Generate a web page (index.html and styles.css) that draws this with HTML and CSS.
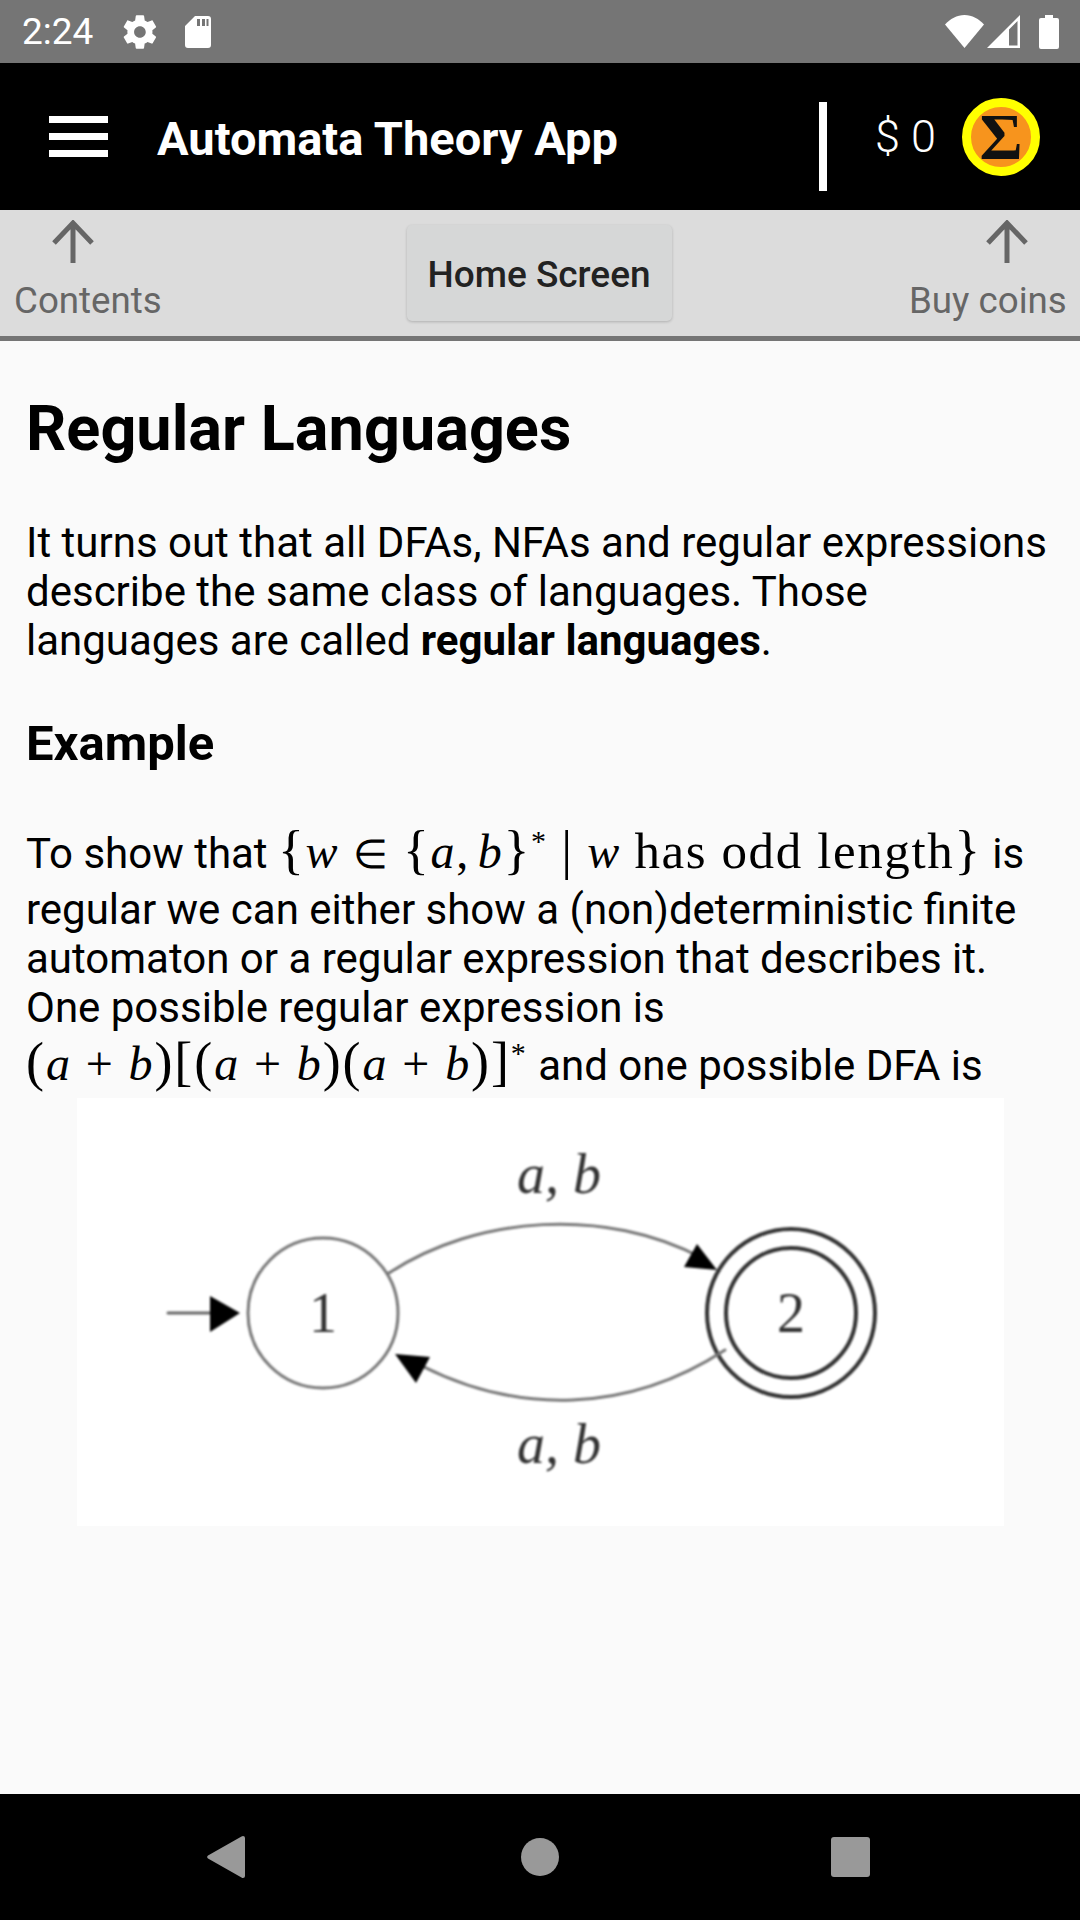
FILE: index.html
```html
<!DOCTYPE html>
<html>
<head>
  <title>Automata Theory App</title>
  <link rel="stylesheet" href="styles.css">
</head>
<body>
  <div class="status-bar">
    <div class="status-left">
      <span class="time">2:24</span>
      <svg class="ic-gear" viewBox="0 0 24 24"><path d="M19.4 13c.04-.32.07-.66.07-1s-.03-.68-.07-1l2.1-1.65c.2-.15.25-.42.12-.64l-2-3.46c-.12-.22-.39-.3-.61-.22l-2.49 1c-.52-.4-1.08-.73-1.69-.98l-.38-2.65C14.4 2.18 14.2 2 13.95 2h-4c-.25 0-.45.18-.49.42l-.38 2.65c-.61.25-1.17.59-1.69.98l-2.49-1c-.23-.09-.49 0-.61.22l-2 3.46c-.13.22-.07.49.12.64L4.5 11c-.04.32-.07.66-.07 1s.03.68.07 1l-2.11 1.65c-.19.15-.25.42-.12.64l2 3.46c.12.22.39.3.61.22l2.49-1c.52.4 1.08.73 1.69.98l.38 2.65c.04.24.24.42.49.42h4c.25 0 .45-.18.49-.42l.38-2.65c.61-.25 1.17-.59 1.69-.98l2.49 1c.23.09.49 0 .61-.22l2-3.46c.12-.22.07-.49-.12-.64L19.4 13zM11.95 15.5c-1.93 0-3.5-1.57-3.5-3.5s1.57-3.5 3.5-3.5 3.5 1.57 3.5 3.5-1.57 3.5-3.5 3.5z"/></svg>
      <svg class="ic-sd" viewBox="0 0 26 32"><path d="M10 0h13a3 3 0 0 1 3 3v26a3 3 0 0 1-3 3H3a3 3 0 0 1-3-3V10zM12 3v7h3V3zM17 3v7h3V3zM21.500 3v7h2V3z" fill-rule="evenodd"/></svg>
    </div>
    <div class="status-right">
      <svg class="ic-wifi" viewBox="0 0 39 33"><path d="M19.500 33 0 9.500C5 4 12 0 19.500 0S34 4 39 9.500z"/></svg>
      <svg class="ic-signal" viewBox="0 0 33 33"><path d="M33 0v33H0zM30.500 6 22 14.500v16h8.500z" fill-rule="evenodd"/></svg>
      <svg class="ic-battery" viewBox="0 0 20 34"><path d="M6 0h8v3h4a2 2 0 0 1 2 2v27a2 2 0 0 1-2 2H2a2 2 0 0 1-2-2V5a2 2 0 0 1 2-2h4z"/></svg>
    </div>
  </div>

  <header class="app-bar">
    <div class="menu-btn"><span></span><span></span><span></span></div>
    <h1 class="app-title">Automata Theory App</h1>
    <div class="divider"></div>
    <span class="coins">$ 0</span>
    <div class="coin"><span>Σ</span></div>
  </header>

  <nav class="toolbar">
    <div class="tool-link">
      <svg class="ic-up ic-up-left" viewBox="0 0 42 44"><path d="M21 43V3M2 23 21 3l19 20" fill="none" stroke="#666" stroke-width="5"/></svg>
      <span>Contents</span>
    </div>
    <button class="home-btn">Home Screen</button>
    <div class="tool-link tool-link-right">
      <svg class="ic-up ic-up-right" viewBox="0 0 42 44"><path d="M21 43V3M2 23 21 3l19 20" fill="none" stroke="#666" stroke-width="5"/></svg>
      <span>Buy coins</span>
    </div>
  </nav>

  <main class="content">
    <h2 class="page-title">Regular Languages</h2>
    <p class="intro">It turns out that all DFAs, NFAs and regular expressions describe the same class of languages. Those languages are called <b>regular languages</b>.</p>
    <h3 class="sub-title">Example</h3>
    <p class="example">To show that <span class="math math-set"><span class="brace">{</span><i>w</i> <span class="rel">∈</span> <span class="brace">{</span><i>a</i>,<i class="after-comma">b</i><span class="brace">}</span><sup>*</sup> <span class="bar">|</span> <i>w</i> <span class="math-text">has odd length</span><span class="brace">}</span></span> is regular we can either show a (non)deterministic finite automaton or a regular expression that describes it. One possible regular expression is <span class="math math-expr"><span class="brace">(</span><i>a</i> + <i>b</i><span class="brace">)[(</span><i>a</i> + <i>b</i><span class="brace">)(</span><i>a</i> + <i>b</i><span class="brace">)]</span><sup>*</sup></span> and one possible DFA is</p>

    <div class="diagram">
      <svg viewBox="0 0 927 428" width="927" height="428">
        <g fill="none" stroke-linecap="round">
          <path d="M91 215H150" stroke="#666" stroke-width="3"/>
          <circle cx="246" cy="215" r="75" stroke="#777" stroke-width="3"/>
          <circle cx="714" cy="215" r="84" stroke="#333" stroke-width="4"/>
          <circle cx="714" cy="215" r="65" stroke="#333" stroke-width="4"/>
          <path d="M312 175C400 117 530 109 625 160" stroke="#777" stroke-width="3"/>
          <path d="M648 252C550 316 440 316 345 268" stroke="#777" stroke-width="3"/>
        </g>
        <g fill="#000">
          <path d="M163 215 133 198V234z"/>
          <path d="M640 172 620 146 607 169z"/>
          <path d="M318 256 353 259 339 285z"/>
        </g>
        <g class="diagram-label">
          <text x="482" y="95" text-anchor="middle" font-style="italic">a, b</text>
          <text x="482" y="365" text-anchor="middle" font-style="italic">a, b</text>
          <text x="246" y="234" text-anchor="middle">1</text>
          <text x="714" y="234" text-anchor="middle">2</text>
        </g>
      </svg>
    </div>
  </main>

  <footer class="nav-bar">
    <svg class="ic-back" viewBox="0 0 38 42"><path d="M36 0a2 2 0 0 1 2 2v38a2 2 0 0 1-2 2c-.6 0-1-.2-1.500-.6L1 22.500a2 2 0 0 1 0-3L34.500.6C35 .2 35.400 0 36 0z"/></svg>
    <div class="nav-circle"></div>
    <div class="nav-square"></div>
  </footer>
</body>
</html>
```

FILE: styles.css
```css
body {
  margin: 0;
  width: 1080px;
  height: 1920px;
  display: flex;
  flex-direction: column;
  font-family: Roboto, sans-serif;
  background-color: #fafafa;
  overflow: hidden;
}

/* status bar */
.status-bar {
  height: 63px;
  background: #757575;
  display: flex;
  justify-content: space-between;
  align-items: center;
  padding: 0 21px 0 22px;
  box-sizing: border-box;
  color: white;
}
.status-left, .status-right {
  display: flex;
  align-items: center;
}
.status-bar svg {
  fill: white;
  display: block;
}
.time {
  font-size: 37px;
  width: 102px;
}
.ic-gear {
  width: 40px;
  height: 40px;
  margin-left: -4px;
}
.ic-sd {
  width: 26px;
  height: 32px;
  margin-left: 25px;
}
.ic-wifi {
  width: 39px;
  height: 33px;
}
.ic-signal {
  width: 33px;
  height: 33px;
  margin-left: 3px;
}
.ic-battery {
  width: 20px;
  height: 34px;
  margin-left: 19px;
}

/* app bar */
.app-bar {
  height: 147px;
  background: #000;
  color: white;
  display: flex;
  align-items: center;
  padding-left: 49px;
  box-sizing: border-box;
}
.menu-btn {
  width: 59px;
  display: flex;
  flex-direction: column;
  gap: 10px;
  margin-top: -1px;
}
.menu-btn span {
  height: 7px;
  background: white;
}
.app-title {
  margin: 4px 0 0 49px;
  font-size: 47px;
  font-weight: 700;
  width: 662px;
}
.divider {
  width: 8px;
  height: 89px;
  background: white;
  margin-top: 20px;
}
.coins {
  font-size: 45px;
  font-weight: 300;
  margin-left: 48px;
  width: 87px;
}
.coin {
  width: 78px;
  height: 78px;
  border-radius: 50%;
  background: #f7941d;
  border: 9px solid #ffff00;
  box-sizing: border-box;
  display: flex;
  align-items: center;
  justify-content: center;
  color: #111;
  font-family: "Liberation Serif", serif;
  font-weight: 700;
  font-size: 66px;
  line-height: 1;
}

/* toolbar under app bar */
.toolbar {
  height: 131px;
  background: #dcdcdc;
  border-bottom: 5px solid #757575;
  box-sizing: border-box;
  display: flex;
  justify-content: space-between;
  padding: 0 14px;
  position: relative;
}
.tool-link {
  display: flex;
  flex-direction: column;
  color: #666;
  font-size: 36.700px;
  padding-top: 10px;
  width: 155px;
  white-space: nowrap;
}
.tool-link-right {
  margin-right: 2px;
}
.ic-up {
  width: 42px;
  height: 44px;
  flex-shrink: 0;
  display: block;
  margin-bottom: 15px;
}
.ic-up-left {
  margin-left: 38px;
}
.ic-up-right {
  margin-left: 77px;
}
.home-btn {
  width: 265px;
  height: 96px;
  margin-top: 15px;
  background: #d6d7d7;
  border: none;
  border-radius: 5px;
  box-shadow: 0 1px 3px rgba(0,0,0,0.2);
  font-family: Roboto, sans-serif;
  font-size: 37px;
  font-weight: 500;
  color: #222;
  padding: 2px 0 0;
}

/* content */
.content {
  flex: 1;
  padding: 0 26px 0 26px;
  color: #000;
  font-size: 42px;
  line-height: 49px;
}
.page-title {
  font-size: 63px;
  font-weight: 700;
  line-height: 70px;
  margin: 53px 0 54px;
}
.intro {
  margin: 0;
}
.sub-title {
  font-size: 49px;
  font-weight: 700;
  line-height: 52px;
  margin: 53px 0 51px;
}
.example {
  margin: 0;
}
.math {
  font-family: "Liberation Serif", serif;
  font-size: 48px;
  display: inline-block;
  vertical-align: baseline;
}
.math-set {
  line-height: 60px;
  letter-spacing: 1.600px;
}
.math-expr {
  line-height: 64px;
  letter-spacing: 1.900px;
}
.math-text {
  font-size: 51px;
}
.rel {
  font-size: 40px;
}
.after-comma {
  margin-left: 8px;
}
.brace {
  font-weight: 400;
  font-size: 54px;
  line-height: 40px;
}
.bar {
  font-size: 54px;
  line-height: 40px;
}
.math sup {
  font-size: 30px;
  line-height: 0;
}
.diagram {
  width: 927px;
  height: 428px;
  margin: 2px auto 0;
  background: white;
}
.diagram svg {
  display: block;
  filter: blur(0.8px);
}
.diagram-label text {
  font-family: "Liberation Serif", serif;
  font-size: 56px;
  fill: #333;
}

/* android nav */
.nav-bar {
  height: 126px;
  background: #000;
  display: flex;
  align-items: center;
  padding-left: 207px;
  box-sizing: border-box;
}
.ic-back {
  width: 38px;
  height: 42px;
  fill: #999;
}
.nav-circle {
  width: 38px;
  height: 38px;
  border-radius: 50%;
  background: #999;
  margin: 0 272px 0 276px;
}
.nav-square {
  width: 39px;
  height: 40px;
  border-radius: 3px;
  background: #999;
}
```
